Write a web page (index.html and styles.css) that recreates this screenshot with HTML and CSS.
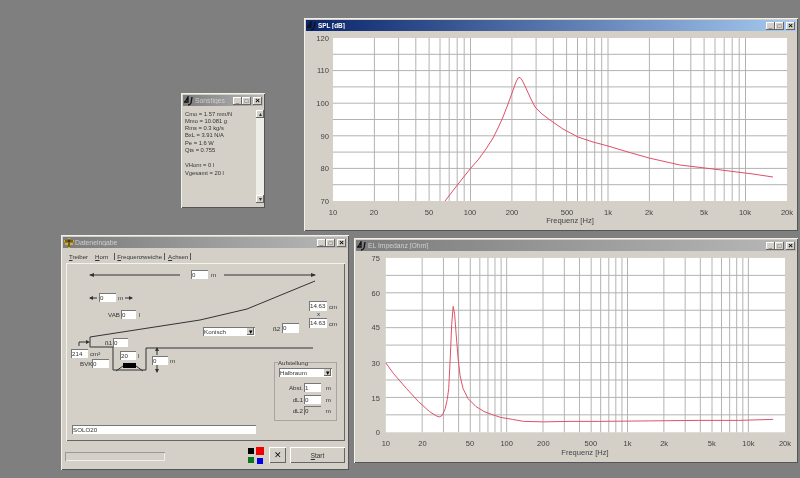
FILE: index.html
```html
<!DOCTYPE html>
<html lang="de">
<head>
<meta charset="utf-8">
<title>Lautsprecher</title>
<link rel="stylesheet" href="styles.css">
</head>
<body>
<main class="desktop">

  <section class="win win-spl">
    <header class="title active">
      <svg class="ico" viewBox="0 0 10 10"><path d="M1 6 L4 1 V6 H0 M8 1 L7 7 Q6 9 4 9" fill="none" stroke="#111" stroke-width="1.3"/></svg>
      <span class="title-text">SPL [dB]</span>
      <span class="tb">_</span><span class="tb">□</span><span class="tb x">×</span>
    </header>
    <svg class="chart" width="489" height="198" viewBox="307 31 489 198">
      <rect x="333" y="38" width="454" height="163" fill="#fff"/>
      <g transform="translate(333 38)" fill="none">
        <path class="grid" d="M0 16.3H454M0 32.6H454M0 48.9H454M0 65.2H454M0 81.5H454M0 97.8H454M0 114.1H454M0 130.4H454M0 146.7H454M41.4 0V163M65.6 0V163M82.8 0V163M96.1 0V163M107 0V163M116.2 0V163M124.2 0V163M131.2 0V163M137.5 0V163M178.9 0V163M203.1 0V163M220.3 0V163M233.6 0V163M244.5 0V163M253.7 0V163M261.7 0V163M268.7 0V163M275 0V163M316.4 0V163M340.6 0V163M357.8 0V163M371.1 0V163M382 0V163M391.2 0V163M399.2 0V163M406.2 0V163M412.5 0V163"/>
      </g>
      <path class="curve" transform="translate(333 38)" d="M112 163 L122 150 L137 131 L145 122 L153 111 L160 100 L165 90 L170 79 L175 66 L179 55 L183 44 L185 40 L187 39.5 L189 42 L192 48 L197 59 L202 69 L209 76 L217 82 L230 91 L245 99 L260 104 L275 108 L295 114 L316 120 L347 127 L380 131 L404 134 L420 136 L440 139"/>
      <g class="ylab">
        <text x="329" y="41">120</text><text x="329" y="73">110</text><text x="329" y="106">100</text><text x="329" y="139">90</text><text x="329" y="171">80</text><text x="329" y="204">70</text>
      </g>
      <g class="xlab">
        <text x="333" y="215">10</text><text x="374" y="215">20</text><text x="429" y="215">50</text><text x="470" y="215">100</text><text x="512" y="215">200</text><text x="567" y="215">500</text><text x="608" y="215">1k</text><text x="649" y="215">2k</text><text x="704" y="215">5k</text><text x="745" y="215">10k</text><text x="787" y="215">20k</text>
        <text x="570" y="223">Frequenz [Hz]</text>
      </g>
    </svg>
  </section>

  <section class="win win-el">
    <header class="title">
      <svg class="ico" viewBox="0 0 10 10"><path d="M1 6 L4 1 V6 H0 M8 1 L7 7 Q6 9 4 9" fill="none" stroke="#111" stroke-width="1.3"/></svg>
      <span class="title-text">EL Impedanz [Ohm]</span>
      <span class="tb">_</span><span class="tb">□</span><span class="tb x">×</span>
    </header>
    <svg class="chart" width="439" height="212" viewBox="357 251 439 212">
      <rect x="384" y="258" width="403" height="176" fill="#fff"/>
      <g transform="translate(384 258)" fill="none">
        <path class="grid" d="M0 17.6H403M0 35.2H403M0 52.8H403M0 70.4H403M0 88H403M0 105.6H403M0 123.2H403M0 140.8H403M0 158.4H403M36.7 0V176M58.2 0V176M73.5 0V176M85.3 0V176M94.9 0V176M103.1 0V176M110.2 0V176M116.4 0V176M122 0V176M158.7 0V176M180.2 0V176M195.5 0V176M207.3 0V176M216.9 0V176M225.1 0V176M232.2 0V176M238.4 0V176M244 0V176M280.7 0V176M302.2 0V176M317.5 0V176M329.3 0V176M338.9 0V176M347.1 0V176M354.2 0V176M360.4 0V176M366 0V176"/>
      </g>
      <path class="curve" d="M384 364 L392 375 L405 390 L417 403 L428 413 L435 417.5 L438 418.5 L441 417 L444 410 L446 401 L447.5 390 L449 360 L450.5 325 L452 307 L453.5 315 L455 335 L457 360 L459 377 L462 390 L467 400 L475 408 L483 413 L491 416 L500 419 L512 421 L523 423 L543 423.5 L570 423 L600 423 L650 422.5 L700 422 L740 422 L775 421"/>
      <g class="ylab">
        <text x="378" y="261">75</text><text x="378" y="296">60</text><text x="378" y="331">45</text><text x="378" y="367">30</text><text x="378" y="402">15</text><text x="378" y="437">0</text>
      </g>
      <g class="xlab">
        <text x="384" y="448">10</text><text x="421" y="448">20</text><text x="469" y="448">50</text><text x="506" y="448">100</text><text x="543" y="448">200</text><text x="591" y="448">500</text><text x="628" y="448">1k</text><text x="665" y="448">2k</text><text x="713" y="448">5k</text><text x="750" y="448">10k</text><text x="787" y="448">20k</text>
        <text x="585" y="457">Frequenz [Hz]</text>
      </g>
    </svg>
  </section>

  <section class="win win-misc">
    <header class="title">
      <svg class="ico" viewBox="0 0 10 10"><path d="M1 6 L4 1 V6 H0 M8 1 L7 7 Q6 9 4 9" fill="none" stroke="#111" stroke-width="1.3"/></svg>
      <span class="title-text">Sonstiges</span>
      <span class="tb">_</span><span class="tb">□</span><span class="tb x">×</span>
    </header>
    <div class="misc-body">
      <div class="misc-text">
        <p>Cmo = 1.57 mm/N</p>
        <p>Mmo = 10.081 g</p>
        <p>Rms = 0.3 kg/s</p>
        <p>BxL = 3.91 N/A</p>
        <p>Pe = 1.6 W</p>
        <p>Qts = 0.755</p>
        <p class="gap">VHorn = 0 l</p>
        <p>Vgesamt = 20 l</p>
      </div>
      <div class="scroll">
        <span class="sbtn">▴</span>
        <span class="sbtn">▾</span>
      </div>
    </div>
  </section>

  <section class="win win-data">
    <header class="title">
      <svg class="ico" viewBox="0 0 10 10"><path d="M5 0V10M0 3H10M1 6H9" fill="none" stroke="#d8b020" stroke-width="2"/><path d="M5 1V9M1 3H9" fill="none" stroke="#111"/></svg>
      <span class="title-text">Dateneingabe</span>
      <span class="tb">_</span><span class="tb">□</span><span class="tb x">×</span>
    </header>
    <nav class="tabs">
      <span class="tab tab-1"><u>T</u>reiber</span>
      <span class="tab tab-on"><u>H</u>orn</span>
      <span class="tab tab-sep"><u>F</u>requenzweiche</span>
      <span class="tab tab-sep"><u>A</u>chsen</span>
    </nav>
    <div class="panel">
      <svg class="horn" width="279" height="178" viewBox="66 263 279 178">
        <g fill="none" stroke="#333">
          <path d="M90 275H180M224 275H315"/>
          <path d="M90 347V337L200 320L247 309L315 281"/>
          <path d="M90 347H113V370H146V348H313"/>
          <path d="M79 346V342H88"/>
          <path d="M116 371L123 366M136 366L143 371" />
          <path d="M157 348V355M157 365V372"/>
          <path d="M90 298H97M125 298H132"/>
        </g>
        <rect x="123" y="363" width="13" height="5" fill="#000"/>
        <g fill="#333">
          <path d="M89 275l5-2v4zM316 275l-5-2v4zM89 298l4-2v4zM133 298l-4-2v4zM90 342l-4-2v4zM157 347l-2 4h4zM157 373l-2-4h4z"/>
        </g>
      </svg>

      <span class="fld f-len">0</span><span class="lbl l-len">m</span>
      <span class="fld f-side">0</span><span class="lbl l-side">m</span>
      <span class="lbl l-vab">VAB</span><span class="fld f-vab">0</span><span class="lbl l-vabu">l</span>
      <span class="lbl l-s1">ß1</span><span class="fld f-s1">0</span>
      <span class="fld f-area">214</span><span class="lbl l-area">cm²</span>
      <span class="lbl l-bvk">BVK</span><span class="fld f-bvk">0</span>
      <span class="fld f-vol">20</span><span class="lbl l-vol">l</span>
      <span class="fld f-dist">0</span><span class="lbl l-dist">m</span>
      <span class="sel s-kon">Konisch<i class="arrow">▾</i></span>
      <span class="lbl l-s2">ß2</span><span class="fld f-s2">0</span>
      <span class="fld f-w">14.63</span><span class="lbl l-w">cm</span>
      <span class="lbl l-x">x</span>
      <span class="fld f-h">14.63</span><span class="lbl l-h">cm</span>

      <fieldset class="group">
        <legend>Aufstellung</legend>
        <span class="sel s-room">Halbraum<i class="arrow">▾</i></span>
        <div class="grow"><span>Abst.</span><span class="fld">1</span><span>m</span></div>
        <div class="grow"><span>dL1</span><span class="fld">0</span><span>m</span></div>
        <div class="grow"><span>dL2</span><span class="fld off">0</span><span>m</span></div>
      </fieldset>

      <span class="fld f-name">SOLO20</span>
    </div>
    <footer class="foot">
      <div class="progress"></div>
      <svg class="colors" width="16" height="17" viewBox="0 0 16 17">
        <rect x="0" y="1" width="6" height="6" fill="#000"/>
        <rect x="8" y="0" width="8" height="8" fill="#f00000"/>
        <rect x="0" y="10" width="6" height="6" fill="#0a7a1e"/>
        <rect x="9" y="11" width="6" height="6" fill="#0000e0"/>
      </svg>
      <span class="btn btn-x">✕</span>
      <span class="btn btn-start"><u>S</u>tart</span>
    </footer>
  </section>

</main>
</body>
</html>
```

FILE: styles.css
```css
* { box-sizing: border-box; }
html, body { margin: 0; padding: 0; }
body { font-family: "Liberation Sans", Arial, sans-serif; font-size: 6.2px; color: #333; }
.desktop { position: relative; width: 800px; height: 478px; overflow: hidden; background: #7f7f7f; filter: blur(0.35px); }

.win {
  position: absolute;
  display: flex;
  flex-direction: column;
  padding: 2px;
  background: #d4d0c8;
  box-shadow: inset 1px 1px 0 #f2f0ea, inset -1px -1px 0 #555;
}
.win-spl { left: 304px; top: 18px; width: 494px; height: 213px; }
.win-el { left: 354px; top: 238px; width: 444px; height: 225px; }
.win-misc { left: 181px; top: 93px; width: 84px; height: 115px; }
.win-data { left: 61px; top: 235px; width: 288px; height: 235px; }

.title {
  display: flex;
  align-items: center;
  flex: none;
  height: 11px;
  padding: 0 1px 0 1px;
  color: #cfcfcf;
  font-size: 6.8px;
  background: linear-gradient(90deg, #7c7c7c, #b8b8b8);
}
.title.active { color: #fff; font-weight: bold; font-size: 6.4px; background: linear-gradient(90deg, #0a246a, #a6caf0); }
.ico { width: 10px; height: 10px; flex: none; }
.title-text { flex: 1; padding-left: 1px; white-space: nowrap; overflow: hidden; }
.tb {
  display: flex; align-items: center; justify-content: center;
  flex: none;
  width: 9px; height: 8px;
  font-size: 6px; line-height: 8px; font-weight: normal;
  color: #333;
  background: #d4d0c8;
  box-shadow: inset -1px -1px 0 #666, inset 1px 1px 0 #fff;
}
.tb.x { margin-left: 2px; color: #000; font-weight: bold; font-size: 8px; }

.chart { display: block; margin-left: 1px; }
.grid { stroke: #b2b2b2; stroke-width: 1; }
.curve { fill: none; stroke: #de5068; stroke-width: 1; stroke-linejoin: round; }
.ylab text { font: 7.6px "Liberation Sans", Arial, sans-serif; fill: #444; text-anchor: end; }
.xlab text { font: 7.6px "Liberation Sans", Arial, sans-serif; fill: #444; text-anchor: middle; }

.misc-body { flex: 1; display: flex; padding: 4px 0 3px 2px; }
.misc-text { flex: 1; padding-top: 0.5px; font-size: 5.8px; line-height: 7.3px; white-space: nowrap; }
.misc-text p { margin: 0; }
.misc-text .gap { margin-top: 8px; }
.scroll {
  flex: none;
  width: 8px;
  margin-right: -1px;
  display: flex; flex-direction: column; justify-content: space-between;
  background: #eeeee8;
}
.sbtn {
  display: block;
  height: 8px;
  font-size: 6px; line-height: 8px; text-align: center;
  background: #d4d0c8;
  box-shadow: inset -1px -1px 0 #666, inset 1px 1px 0 #fff;
}

.tabs { display: flex; flex: none; height: 15px; align-items: center; padding: 2px 0 0 3px; }
.tab { white-space: nowrap; font-size: 6.1px; }
.tab-1 { padding-left: 3px; margin-right: 7px; }
.tab-on { padding-right: 6px; margin-right: 3px; box-shadow: 1px 0 0 #555; }
.tab-sep { padding-right: 2px; margin-right: 4px; box-shadow: 1px 0 0 #555; }

.panel {
  position: relative;
  flex: none;
  width: 279px;
  height: 178px;
  margin-left: 3px;
  box-shadow: inset 1px 1px 0 #f4f2ec, inset -1px -1px 0 #666;
}
.horn { position: absolute; left: 0; top: 0; }

.fld {
  display: block;
  padding-left: 1px;
  line-height: 9px;
  height: 9px;
  white-space: nowrap;
  background: #fff;
  box-shadow: inset 1px 1px 0 #777;
}
.panel > .fld { position: absolute; }
.lbl { position: absolute; line-height: 9px; white-space: nowrap; }
.fld.off { background: #d4d0c8; }

.f-len { left: 125px; top: 7px; width: 17px; }
.l-len { left: 145px; top: 7px; }
.f-side { left: 33px; top: 30px; width: 17px; }
.l-side { left: 52px; top: 30px; }
.l-vab { left: 42px; top: 47px; }
.f-vab { left: 55px; top: 47px; width: 15px; }
.l-vabu { left: 73px; top: 47px; }
.l-s1 { left: 39px; top: 75px; }
.f-s1 { left: 47px; top: 75px; width: 15px; }
.f-area { left: 5px; top: 86px; width: 17px; }
.l-area { left: 24px; top: 86px; }
.l-bvk { left: 14px; top: 96px; }
.f-bvk { left: 26px; top: 96px; width: 17px; }
.f-vol { left: 54px; top: 88px; width: 16px; }
.l-vol { left: 72px; top: 88px; }
.f-dist { left: 86px; top: 93px; width: 16px; }
.l-dist { left: 104px; top: 93px; }
.l-s2 { left: 207px; top: 61px; }
.f-s2 { left: 216px; top: 60px; width: 17px; height: 10px; }
.f-w { left: 243px; top: 38px; width: 18px; height: 10px; }
.l-w { left: 263px; top: 39px; }
.l-x { left: 251px; top: 46px; }
.f-h { left: 243px; top: 55px; width: 18px; height: 10px; }
.l-h { left: 263px; top: 56px; }
.f-name { left: 6px; top: 162px; width: 184px; }

.sel {
  display: flex;
  justify-content: space-between;
  align-items: center;
  height: 9px;
  padding-left: 1px;
  background: #fff;
  box-shadow: inset 1px 1px 0 #777;
}
.s-kon { position: absolute; left: 137px; top: 64px; width: 52px; }
.arrow {
  display: block;
  width: 7px; height: 7px;
  margin-right: 1px;
  font-style: normal; font-size: 7px; line-height: 7px; text-align: center;
  color: #000;
  background: #d4d0c8;
  box-shadow: inset -1px -1px 0 #666;
}

.group {
  position: absolute;
  left: 208px;
  top: 96px;
  width: 63px;
  height: 62px;
  margin: 0;
  padding: 0 4px 0 4px;
  border: 1px solid #a8a59e;
  display: flex;
  flex-direction: column;
}
.group legend { padding: 0; margin-left: -1px; font-size: 6.1px; line-height: 7px; }
.s-room { flex: none; margin-top: 2px; width: 53px; }
.grow {
  display: grid;
  grid-template-columns: 25px 17px 1fr;
  align-items: center;
  height: 11.4px;
  text-align: right;
}
.grow:first-of-type { margin-top: 5px; }
.grow span:first-child { padding-right: 1px; }
.grow .fld { text-align: left; }
.grow span:last-child { text-align: right; padding-right: 1px; }

.foot {
  display: flex;
  flex: none;
  align-items: flex-start;
  margin-top: 6px;
  padding-left: 2px;
}
.progress {
  flex: none;
  width: 100px;
  height: 9px;
  margin-top: 5px;
  box-shadow: inset 1px 1px 0 #999, inset -1px -1px 0 #eee;
}
.colors { flex: none; margin-left: 83px; margin-right: 5px; }
.btn {
  display: flex; align-items: center; justify-content: center;
  flex: none;
  height: 16px;
  background: #d4d0c8;
  box-shadow: inset 1px 1px 0 #fff, inset -1px -1px 0 #666;
}
.btn-x { width: 17px; font-size: 9px; color: #111; }
.btn-start { width: 55px; margin-left: 4px; font-size: 6.4px; }
```
